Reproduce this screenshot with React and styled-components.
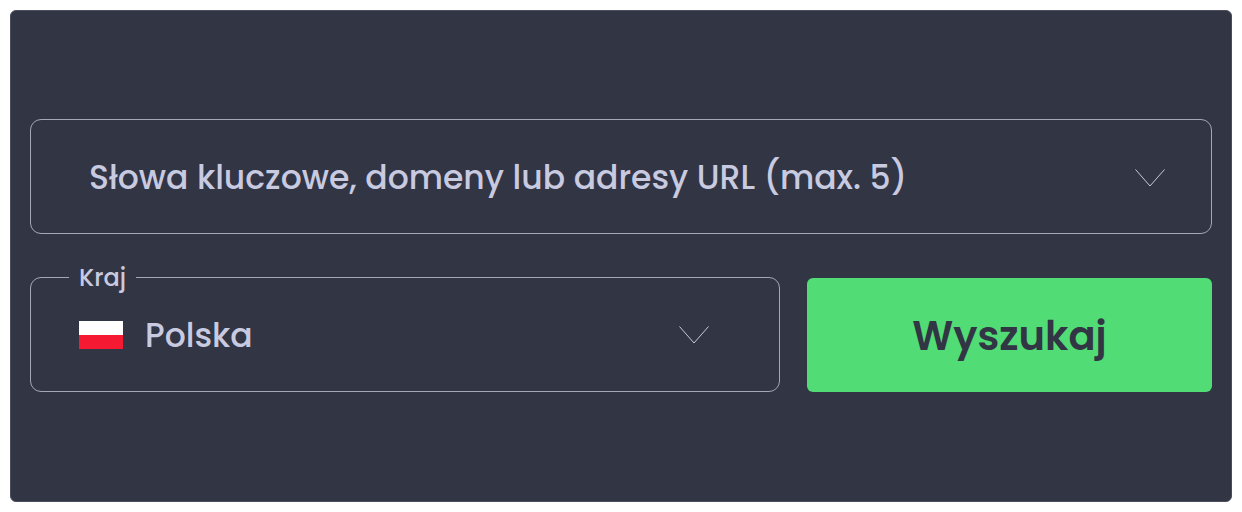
import React, { useState } from "react";
import styled, { createGlobalStyle } from "styled-components";

const GlobalStyle = createGlobalStyle`
  * {
    box-sizing: border-box;
  }

  body {
    margin: 0;
    background: #ffffff;
    font-family: Poppins, Inter, "Open Sans", sans-serif;
  }
`;

function ChevronIcon() {
  return (
    <Chevron viewBox="0 0 30 18" aria-hidden="true">
      <path d="M0.5 0.5 L15 17 L29.5 0.5" />
    </Chevron>
  );
}

function PolishFlag() {
  return (
    <Flag viewBox="0 0 44 28" aria-hidden="true">
      <rect width="44" height="14" fill="#ffffff" />
      <rect y="14" width="44" height="14" fill="#f51a32" />
    </Flag>
  );
}

function App() {
  const [query, setQuery] = useState("");
  const [country, setCountry] = useState("pl");

  return (
    <>
      <GlobalStyle />
      <Panel onSubmit={(e) => e.preventDefault()}>
        <SearchField>
          <TextInput
            type="text"
            aria-label="Słowa kluczowe, domeny lub adresy URL (max. 5)"
            placeholder="Słowa kluczowe, domeny lub adresy URL (max. 5)"
            value={query}
            onChange={(e) => setQuery(e.target.value)}
          />
          <ToggleButton type="button" aria-label="Rozwiń">
            <ChevronIcon />
          </ToggleButton>
        </SearchField>
        <Row>
          <CountryField>
            <Legend>
              <label htmlFor="country">Kraj</label>
            </Legend>
            <CountryBody>
              <PolishFlag />
              <Select
                id="country"
                value={country}
                onChange={(e) => setCountry(e.target.value)}
              >
                <option value="pl">Polska</option>
              </Select>
              <ChevronIcon />
            </CountryBody>
          </CountryField>
          <SubmitButton type="submit">Wyszukaj</SubmitButton>
        </Row>
      </Panel>
    </>
  );
}

const Panel = styled.form`
  display: flex;
  flex-direction: column;
  gap: 29px;
  margin: 10px;
  padding: 108px 19px 109px;
  border: 1px solid #4a4c60;
  border-radius: 6px;
  background: #323544;
`;

const SearchField = styled.div`
  display: flex;
  align-items: center;
  min-height: 115px;
  padding: 2px 46px 0 58px;
  border: 1px solid #a5a7b8;
  border-radius: 11px;
`;

const TextInput = styled.input`
  flex: 1;
  min-width: 0;
  height: 56px;
  padding: 0;
  border: 0;
  outline: 0;
  background: transparent;
  color: #c8cae0;
  font: inherit;
  font-size: 33px;
  font-weight: 500;

  &::placeholder {
    color: #c8cae0;
    opacity: 1;
  }
`;

const ToggleButton = styled.button`
  display: flex;
  padding: 0;
  border: 0;
  background: transparent;
  cursor: pointer;
`;

const Row = styled.div`
  display: grid;
  grid-template-columns: 50fr 27fr;
  align-items: end;
  gap: 27px;
`;

const CountryField = styled.fieldset`
  min-width: 0;
  margin: 0;
  padding: 0 70px 12px 48px;
  border: 1px solid #a5a7b8;
  border-radius: 11px;
`;

const Legend = styled.legend`
  margin-left: -10px;
  padding: 2px 10px 0;
  color: #c8cae0;
  font-size: 24px;
  font-weight: 500;
  line-height: 26px;
`;

const CountryBody = styled.div`
  display: flex;
  align-items: center;
  gap: 22px;
  height: 88px;
`;

const Select = styled.select`
  flex: 1;
  min-width: 0;
  height: 56px;
  padding: 0;
  border: 0;
  outline: 0;
  appearance: none;
  background: transparent;
  color: #c8cae0;
  font: inherit;
  font-size: 33px;
  font-weight: 500;
  cursor: pointer;
`;

const SubmitButton = styled.button`
  height: 114px;
  padding: 2px 0 0;
  border: 0;
  border-radius: 6px;
  background: #51dc75;
  color: #323544;
  font: inherit;
  font-size: 40px;
  font-weight: 600;
  cursor: pointer;
`;

const Chevron = styled.svg`
  flex: none;
  width: 30px;
  height: 18px;
  fill: none;
  stroke: #c8cae0;
  stroke-width: 1;
`;

const Flag = styled.svg`
  flex: none;
  width: 44px;
  height: 28px;
`;

export default App;
